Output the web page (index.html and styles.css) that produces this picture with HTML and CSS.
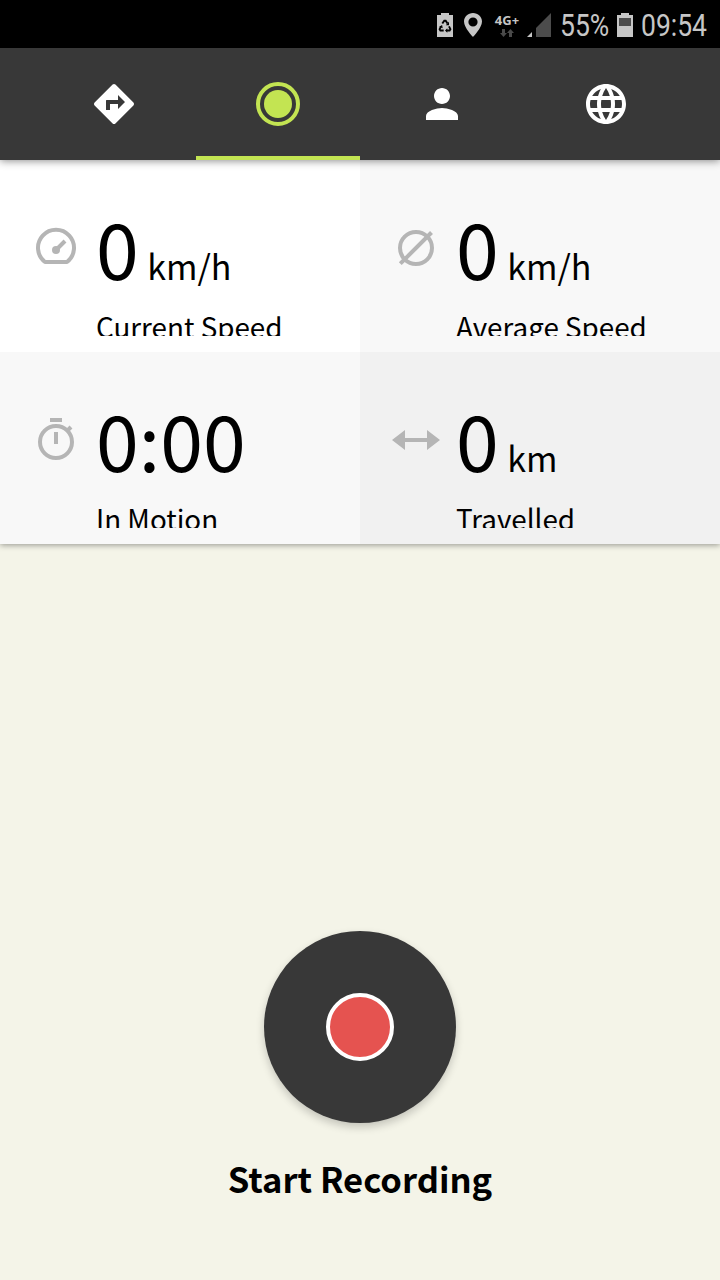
FILE: index.html
```html
<!DOCTYPE html>
<html lang="en">
<head>
  <meta charset="UTF-8" />
  <meta name="viewport" content="width=device-width, initial-scale=1.0"/>
  <title>Start Recording</title>
  <link rel="stylesheet" href="styles.css">
</head>
<body>
  <!-- Status Bar -->
  <div class="status-bar">
    <svg class="status-saver" width="16" height="24" viewBox="0 0 16 24">
      <path d="M0 2h4V0h8v2h4v22H0z" fill="#c6c6c6"/>
      <g fill="none" stroke="#000" stroke-width="1.9">
        <path d="M5.300 10.500L7.300 7.700h1.400l1.800 2.800"/>
        <path d="M12 13.300l1.400 2.900-.8 1.300H9.800"/>
        <path d="M4 13.300l-1.400 2.900.8 1.300H6.700"/>
      </g>
      <path d="M12 8.800v3.500H8.800zM10.300 15.200v4.600L8 17.500zM2.200 13.800l2.900-1.900.6 3.300z" fill="#000"/>
    </svg>
    <svg class="status-pin" width="18" height="24" viewBox="0 0 18 24">
      <path d="M9 0C4 0 0 3.800 0 8.600 0 15 9 24 9 24s9-9 9-15.400C18 3.800 14 0 9 0zm0 4.400a4.600 4.600 0 1 1 0 9.200 4.600 4.600 0 0 1 0-9.200z" fill="#c6c6c6" fill-rule="evenodd"/>
    </svg>
    <div class="network">
      <span class="network-type">4G+</span>
      <svg width="14" height="8" viewBox="0 0 14 8">
        <path d="M2 0h3v4h2L3.500 8 0 4h2zM9 8h3V4h2l-3.500-4L7 4h2z" fill="#4a4a4a"/>
      </svg>
    </div>
    <svg class="status-signal" width="25" height="24" viewBox="0 0 25 24">
      <path d="M5 19v5H0z" fill="#c6c6c6"/>
      <path d="M24 0v24H9V15z" fill="#4c4c4c"/>
    </svg>
    <span class="status-text percent"><span>55%</span></span>
    <svg class="status-battery" width="16" height="24" viewBox="0 0 16 24">
      <path d="M0 2h4V0h8v2h4v22H0z" fill="#c6c6c6"/>
      <path d="M2 5h12v8H2z" fill="#4c4c4c"/>
    </svg>
    <span class="status-text clock"><span>09:54</span></span>
  </div>

  <!-- Tabs -->
  <nav class="tabs">
    <a class="tab">
      <svg width="48" height="48" viewBox="0 0 24 24">
        <path d="M21.710 11.290l-9-9c-.39-.39-1.020-.39-1.410 0l-9 9c-.39.39-.39 1.020 0 1.410l9 9c.39.39 1.020.39 1.410 0l9-9c.39-.38.39-1.010 0-1.410zM14 14.500V12h-4v3H8v-4.700c0-.2.100-.3.300-.3H14V7.500l3.500 3.500-3.500 3.500z" fill="#fff"/>
      </svg>
    </a>
    <a class="tab active">
      <svg width="48" height="48" viewBox="0 0 48 48">
        <circle cx="24" cy="24" r="20" fill="none" stroke="#c3e452" stroke-width="4"/>
        <circle cx="24" cy="24" r="14" fill="#c3e452"/>
      </svg>
    </a>
    <a class="tab">
      <svg width="48" height="48" viewBox="0 0 24 24">
        <path d="M12 12c2.210 0 4-1.790 4-4s-1.790-4-4-4-4 1.790-4 4 1.790 4 4 4zm0 2c-2.670 0-8 1.340-8 4v2h16v-2c0-2.660-5.330-4-8-4z" fill="#fff"/>
      </svg>
    </a>
    <a class="tab">
      <svg width="48" height="48" viewBox="0 0 24 24">
        <path d="M11.990 2C6.470 2 2 6.480 2 12s4.470 10 9.990 10C17.520 22 22 17.520 22 12S17.520 2 11.990 2zm6.930 6h-2.950c-.32-1.250-.78-2.450-1.380-3.560 1.840.63 3.370 1.910 4.330 3.560zM12 4.040c.83 1.200 1.480 2.530 1.910 3.960h-3.820c.43-1.430 1.080-2.760 1.910-3.960zM4.260 14C4.100 13.360 4 12.690 4 12s.1-1.360.26-2h3.380c-.08.66-.14 1.320-.14 2 0 .68.06 1.340.14 2H4.260zm.82 2h2.950c.32 1.250.78 2.450 1.380 3.560-1.840-.63-3.370-1.900-4.330-3.560zm2.950-8H5.080c.96-1.660 2.490-2.930 4.330-3.560C8.810 5.550 8.350 6.750 8.030 8zM12 19.960c-.83-1.200-1.480-2.530-1.910-3.960h3.820c-.43 1.430-1.080 2.760-1.910 3.960zM14.340 14H9.660c-.09-.66-.16-1.320-.16-2 0-.68.07-1.350.16-2h4.680c.09.65.16 1.320.16 2 0 .68-.07 1.340-.16 2zm.25 5.560c.6-1.110 1.060-2.310 1.380-3.560h2.950c-.96 1.650-2.490 2.930-4.330 3.560zM16.360 14c.08-.66.14-1.320.14-2 0-.68-.06-1.340-.14-2h3.380c.16.64.26 1.310.26 2s-.1 1.360-.26 2h-3.380z" fill="#fff"/>
      </svg>
    </a>
  </nav>

  <!-- Stats -->
  <section class="stats">
    <div class="stat white">
      <svg class="stat-icon" width="48" height="48" viewBox="0 0 48 48">
        <path d="M13 38a18 18 0 1 1 22 0z" stroke-linejoin="round"/>
        <path d="M24 26l9-9"/>
        <circle class="solid" cx="24" cy="26" r="4"/>
      </svg>
      <div class="stat-body">
        <div class="value">0<span class="unit">km/h</span></div>
        <div class="label">Current Speed</div>
      </div>
    </div>
    <div class="stat light">
      <svg class="stat-icon" width="48" height="48" viewBox="0 0 48 48">
        <circle cx="24" cy="24" r="16"/>
        <path d="M8.300 39.700L39.500 8.500"/>
      </svg>
      <div class="stat-body">
        <div class="value">0<span class="unit">km/h</span></div>
        <div class="label">Average Speed</div>
      </div>
    </div>
    <div class="stat light">
      <svg class="stat-icon" width="48" height="48" viewBox="0 0 48 48">
        <circle cx="24" cy="26" r="16"/>
        <path d="M18 4h12M24 16v12M35 15l4-4"/>
      </svg>
      <div class="stat-body">
        <div class="value">0:00</div>
        <div class="label">In Motion</div>
      </div>
    </div>
    <div class="stat grey">
      <svg class="stat-icon" width="48" height="48" viewBox="0 0 48 48">
        <path d="M12 24h24"/>
        <path class="solid" d="M0 24l13-10v20zM48 24L35 14v20z"/>
      </svg>
      <div class="stat-body">
        <div class="value">0<span class="unit">km</span></div>
        <div class="label">Travelled</div>
      </div>
    </div>
  </section>

  <!-- Record Button -->
  <main class="recorder">
    <button class="record-btn"><span class="record-dot"></span></button>
    <div class="record-label">Start Recording</div>
  </main>
</body>
</html>
```
FILE: styles.css
```css
body {
  margin: 0;
  height: 1280px;
  display: flex;
  flex-direction: column;
  overflow: hidden;
  font-family: "Noto Sans CJK SC", "Noto Sans", sans-serif;
  background-color: #f4f4e8;
  color: #000;
}

svg {
  display: block;
}

.status-bar {
  display: flex;
  justify-content: flex-end;
  height: 35px;
  padding: 13px 12px 0 0;
  background-color: #000;
  color: #c6c6c6;
}

.status-pin {
  margin-left: 11px;
}

.network {
  display: flex;
  flex-direction: column;
  align-items: center;
  width: 26px;
  margin-left: 12px;
}

.network-type {
  height: 16px;
  font: bold 13px/14px "Open Sans", sans-serif;
}

.status-signal {
  margin-left: 7px;
}

.status-text {
  font: 31px/26px Roboto, sans-serif;
}

.status-text span {
  display: block;
  transform: scaleX(0.855);
  transform-origin: 0 0;
}

.percent {
  width: 48px;
  margin-left: 8px;
}

.status-battery {
  margin-left: 9px;
}

.clock {
  width: 67px;
  margin-left: 8px;
}

.tabs {
  display: flex;
  height: 112px;
  padding: 0 32px;
  background-color: #383838;
  box-shadow: 0 1px 8px rgba(0, 0, 0, 0.45);
  position: relative;
  z-index: 2;
}

.tab {
  flex: 1;
  display: flex;
  align-items: center;
  justify-content: center;
  box-sizing: border-box;
}

.tab.active {
  padding-top: 4px;
  border-bottom: 4px solid #c3e452;
}

.stats {
  display: grid;
  grid-template-columns: 1fr 1fr;
  grid-auto-rows: 192px;
  box-shadow: 0 1px 6px rgba(0, 0, 0, 0.4);
}

.stat {
  display: flex;
  gap: 16px;
  box-sizing: border-box;
  padding: 16px 16px 16px 32px;
}

.white {
  background-color: #fff;
}

.light {
  background-color: #f8f8f8;
}

.grey {
  background-color: #f1f1f1;
}

.stat-icon {
  margin-top: 48px;
  fill: none;
  stroke: #b5b5b5;
  stroke-width: 4;
}

.stat-icon .solid {
  fill: #b5b5b5;
  stroke: none;
}

.stat-body {
  flex: 1;
  overflow: hidden;
  white-space: nowrap;
}

.value {
  height: 126px;
  font-size: 77px;
  line-height: 142px;
}

.unit {
  margin-left: 8.500px;
  font-size: 34px;
}

.label {
  font-size: 27.800px;
  line-height: 48px;
}

.recorder {
  flex: 1;
  display: flex;
  flex-direction: column;
  align-items: center;
  justify-content: flex-end;
  padding-bottom: 72px;
}

.record-btn {
  display: flex;
  align-items: center;
  justify-content: center;
  width: 192px;
  height: 192px;
  padding: 0;
  border: none;
  border-radius: 50%;
  background-color: #383838;
  box-shadow: 0 4px 8px rgba(0, 0, 0, 0.2);
}

.record-dot {
  width: 60px;
  height: 60px;
  border: 4px solid #fff;
  border-radius: 50%;
  background-color: #e55350;
}

.record-label {
  margin-top: 25px;
  font-size: 34.600px;
  font-weight: bold;
  line-height: 60px;
}
```
